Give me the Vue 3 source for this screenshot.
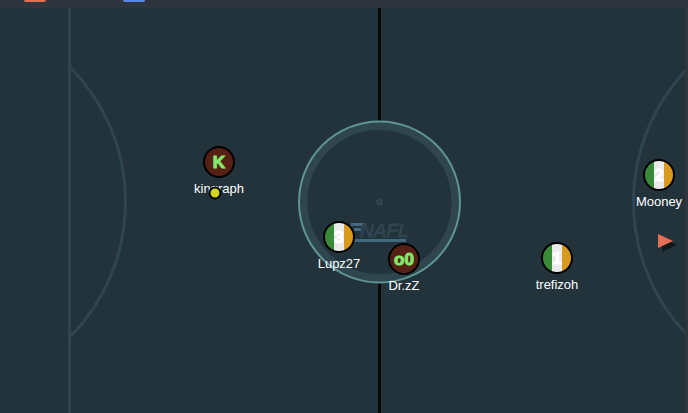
<script setup>
const players = [
  { name: 'kingraph', x: 219, y: 154, avatar: 'K', kit: 'maroon' },
  { name: 'Lupz27', x: 339, y: 229, avatar: '3', kit: 'tricolor' },
  { name: 'Dr.zZ', x: 404, y: 251, avatar: 'o0', kit: 'maroon' },
  { name: 'trefizoh', x: 557, y: 250, avatar: '1', kit: 'tricolor' },
  { name: 'Mooney', x: 659, y: 167, avatar: '2', kit: 'tricolor' },
]
</script>

<template>
  <main class="game">
    <header class="scorebar">
      <span class="team red"></span>
      <span class="team blue"></span>
    </header>
    <section class="stage">
      <svg class="pitch" viewBox="0 0 685 405" preserveAspectRatio="xMidYMid slice" role="img" aria-label="Pitch">
        <defs>
          <clipPath id="disc"><circle r="15" /></clipPath>
        </defs>

        <!-- goal areas -->
        <g class="marking">
          <path d="M69.5 0V405" />
          <path d="M71 60A192 192 0 0 1 71 328" />
          <path d="M689 59A192 192 0 0 0 689 329" />
        </g>

        <!-- halfway line and kick-off circle -->
        <path class="halfway" d="M379.5 0V113M379.5 275V405" />
        <circle class="ring" cx="379.5" cy="194" r="76" />
        <circle class="kickoff" cx="379.5" cy="194" r="80.5" />
        <circle class="spot" cx="379.5" cy="194" r="3.5" />
        <circle class="spot-core" cx="379.5" cy="194" r="1" />

        <!-- league emblem -->
        <g>
          <path class="emblem-bar" d="M351 216.5H365M354 221.5H361M352 232.5H406" />
          <text class="emblem" x="360" y="229">NAFL</text>
        </g>

        <g v-for="p in players" :key="p.name" :transform="`translate(${p.x} ${p.y})`">
          <g clip-path="url(#disc)">
            <rect v-if="p.kit === 'maroon'" class="maroon" x="-16" y="-16" width="32" height="32" />
            <template v-else>
              <rect class="green" x="-16" y="-16" width="11" height="32" />
              <rect class="white" x="-5" y="-16" width="10" height="32" />
              <rect class="orange" x="5" y="-16" width="11" height="32" />
            </template>
          </g>
          <text class="avatar" :class="p.kit" y="6">{{ p.avatar }}</text>
          <circle class="outline" r="15" />
          <text class="name" y="31">{{ p.name }}</text>
        </g>

        <circle class="ball" cx="215" cy="185" r="5.5" />

        <path class="arrow-shadow" d="M662 229V244L677 237Z" />
        <path class="arrow" d="M658 226V240L673 233Z" />
      </svg>
    </section>
  </main>
</template>

<style>
body {
  margin: 0;
  background: #2f353d;
}
</style>

<style scoped>
.game {
  display: flex;
  flex-direction: column;
  height: 100vh;
  overflow: hidden;
  background: #2f353d;
  font-family: "Liberation Sans", Arial, sans-serif;
}
.scorebar {
  display: flex;
  gap: 77px;
  height: 8px;
  flex: none;
  padding-left: 24px;
}
.team {
  width: 22px;
  height: 2px;
  border-radius: 0 0 4px 4px;
}
.red {
  background: #e56e56;
}
.blue {
  background: #5689e5;
}
.stage {
  flex: 1;
  min-height: 0;
  padding-right: 3px;
}
.pitch {
  display: block;
  width: 100%;
  height: 100%;
  background: #23333c;
}
.marking {
  fill: none;
  stroke: #2f4550;
  stroke-width: 3;
}
.halfway {
  stroke: #060809;
  stroke-width: 3;
}
.ring {
  fill: none;
  stroke: #2f4550;
  stroke-width: 8;
}
.kickoff {
  fill: none;
  stroke: #5f9591;
  stroke-width: 2;
}
.spot {
  fill: #2f4550;
}
.spot-core {
  fill: #293c46;
}
.emblem {
  fill: #2f4550;
  stroke: #2f4550;
  stroke-width: 1;
  font-size: 19px;
  font-style: italic;
}
.emblem-bar {
  fill: none;
  stroke: #446b7d;
  stroke-width: 3;
}
rect.maroon {
  fill: #562015;
}
.green {
  fill: #388a37;
}
.white {
  fill: #eaeaea;
}
.orange {
  fill: #d8991d;
}
.outline {
  fill: none;
  stroke: #000;
  stroke-width: 2;
}
.avatar {
  font-size: 17px;
  font-weight: 700;
  text-anchor: middle;
}
.avatar.maroon {
  fill: #84e86c;
  stroke: #84e86c;
  stroke-width: 1;
}
.avatar.tricolor {
  fill: #fff;
  stroke: #fff;
  stroke-width: 1;
}
.name {
  font-size: 13px;
  text-anchor: middle;
  fill: #fff;
}
.ball {
  fill: #d3d81c;
  stroke: #000;
  stroke-width: 2;
}
.arrow {
  fill: #e56e56;
}
.arrow-shadow {
  fill: #12191d;
}
</style>
